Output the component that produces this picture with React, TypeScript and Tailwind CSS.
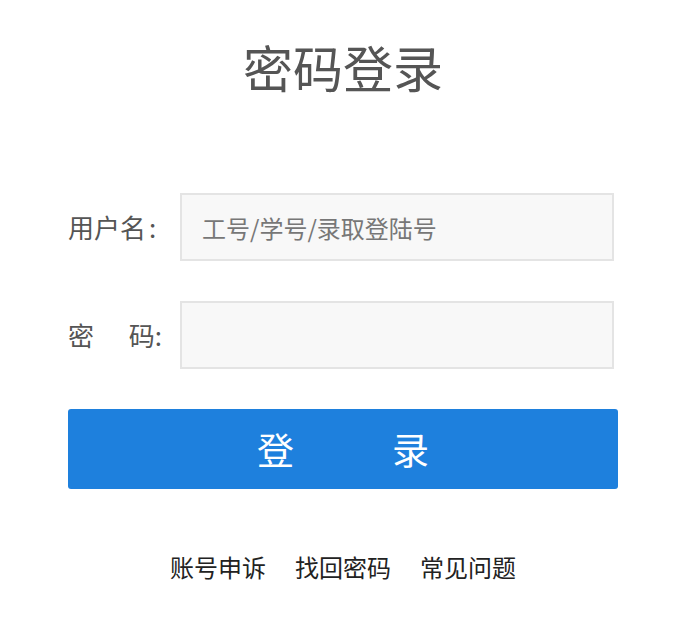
import React from 'react'

const font = { fontFamily: '"Noto Sans CJK SC", "Noto Sans", sans-serif' }

export default function App() {
  return (
    <div className="min-h-[639px] w-[695px] bg-white" style={font}>
      <div className="ml-[68px] w-[550px] pt-[41px]">
        <h1 className="text-center text-[50px] font-normal leading-[50px] text-[#555555]">密码登录</h1>

        <div className="mt-[102px] flex flex-col gap-[40px]">
          <div className="flex items-center">
            <label className="flex w-[94px] text-[26px] leading-none text-[#555555]">
              <span>用户名</span>
              <span className="ml-[3px]">:</span>
            </label>
            <input
              className="ml-[18px] h-[68px] w-[434px] border-2 border-[#e4e4e4] bg-[#f8f8f8] px-[20px] text-[24px] text-[#333] outline-none placeholder:text-[#777777]"
              placeholder="工号/学号/录取登陆号"
            />
          </div>
          <div className="flex items-center">
            <label className="flex w-[94px] justify-between text-[26px] leading-none text-[#555555]">
              <span>密</span>
              <span>码:</span>
            </label>
            <input
              type="password"
              className="ml-[18px] h-[68px] w-[434px] border-2 border-[#e4e4e4] bg-[#f8f8f8] px-[20px] text-[24px] outline-none"
            />
          </div>
        </div>

        <button className="mt-[40px] flex h-[80px] w-[550px] items-center justify-center gap-[98px] rounded-[3px] bg-[#1e80dd] text-[37px] leading-none text-white">
          <span>登</span>
          <span>录</span>
        </button>

        <div className="mt-[66px] flex justify-center gap-[29px] text-[24px] leading-none text-[#222222]">
          <a>账号申诉</a>
          <a>找回密码</a>
          <a>常见问题</a>
        </div>
      </div>
    </div>
  )
}
